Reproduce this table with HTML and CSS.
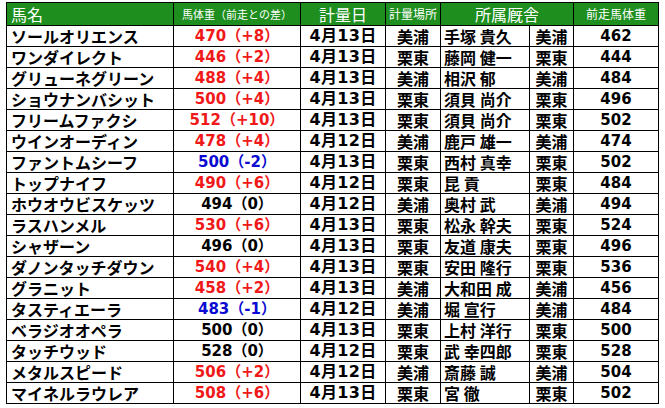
FILE: index.html
```html
<!DOCTYPE html>
<html lang="ja">
<head>
<meta charset="utf-8">
<link rel="stylesheet" href="styles.css">
</head>
<body>
<table class="tbl">
  <colgroup>
    <col class="c-name"><col class="c-wt"><col class="c-date"><col class="c-place"><col class="c-trainer"><col class="c-area"><col class="c-prev">
  </colgroup>
  <thead>
    <tr class="head">
      <th class="h-left h-big">馬名</th>
      <th class="h-xs">馬体重（前走との差）</th>
      <th class="h-big">計量日</th>
      <th class="h-sm">計量場所</th>
      <th class="h-big" colspan="2">所属厩舎</th>
      <th class="h-sm">前走馬体重</th>
    </tr>
  </thead>
  <tbody>
    <tr><td class="name">ソールオリエンス</td><td class="wt up">470（+8）</td><td class="date">4月13日</td><td class="ctr">美浦</td><td class="trainer">手塚 貴久</td><td class="ctr">美浦</td><td class="num">462</td></tr>
    <tr><td class="name">ワンダイレクト</td><td class="wt up">446（+2）</td><td class="date">4月13日</td><td class="ctr">栗東</td><td class="trainer">藤岡 健一</td><td class="ctr">栗東</td><td class="num">444</td></tr>
    <tr><td class="name">グリューネグリーン</td><td class="wt up">488（+4）</td><td class="date">4月13日</td><td class="ctr">美浦</td><td class="trainer">相沢 郁</td><td class="ctr">美浦</td><td class="num">484</td></tr>
    <tr><td class="name">ショウナンバシット</td><td class="wt up">500（+4）</td><td class="date">4月13日</td><td class="ctr">栗東</td><td class="trainer">須貝 尚介</td><td class="ctr">栗東</td><td class="num">496</td></tr>
    <tr><td class="name">フリームファクシ</td><td class="wt up">512（+10）</td><td class="date">4月13日</td><td class="ctr">栗東</td><td class="trainer">須貝 尚介</td><td class="ctr">栗東</td><td class="num">502</td></tr>
    <tr><td class="name">ウインオーディン</td><td class="wt up">478（+4）</td><td class="date">4月12日</td><td class="ctr">美浦</td><td class="trainer">鹿戸 雄一</td><td class="ctr">美浦</td><td class="num">474</td></tr>
    <tr><td class="name">ファントムシーフ</td><td class="wt down">500（-2）</td><td class="date">4月13日</td><td class="ctr">栗東</td><td class="trainer">西村 真幸</td><td class="ctr">栗東</td><td class="num">502</td></tr>
    <tr><td class="name">トップナイフ</td><td class="wt up">490（+6）</td><td class="date">4月12日</td><td class="ctr">栗東</td><td class="trainer">昆 貢</td><td class="ctr">栗東</td><td class="num">484</td></tr>
    <tr><td class="name">ホウオウビスケッツ</td><td class="wt">494（0）</td><td class="date">4月12日</td><td class="ctr">美浦</td><td class="trainer">奥村 武</td><td class="ctr">美浦</td><td class="num">494</td></tr>
    <tr><td class="name">ラスハンメル</td><td class="wt up">530（+6）</td><td class="date">4月13日</td><td class="ctr">栗東</td><td class="trainer">松永 幹夫</td><td class="ctr">栗東</td><td class="num">524</td></tr>
    <tr><td class="name">シャザーン</td><td class="wt">496（0）</td><td class="date">4月13日</td><td class="ctr">栗東</td><td class="trainer">友道 康夫</td><td class="ctr">栗東</td><td class="num">496</td></tr>
    <tr><td class="name">ダノンタッチダウン</td><td class="wt up">540（+4）</td><td class="date">4月13日</td><td class="ctr">栗東</td><td class="trainer">安田 隆行</td><td class="ctr">栗東</td><td class="num">536</td></tr>
    <tr><td class="name">グラニット</td><td class="wt up">458（+2）</td><td class="date">4月13日</td><td class="ctr">美浦</td><td class="trainer">大和田 成</td><td class="ctr">美浦</td><td class="num">456</td></tr>
    <tr><td class="name">タスティエーラ</td><td class="wt down">483（-1）</td><td class="date">4月12日</td><td class="ctr">美浦</td><td class="trainer">堀 宣行</td><td class="ctr">美浦</td><td class="num">484</td></tr>
    <tr><td class="name">ベラジオオペラ</td><td class="wt">500（0）</td><td class="date">4月13日</td><td class="ctr">栗東</td><td class="trainer">上村 洋行</td><td class="ctr">栗東</td><td class="num">500</td></tr>
    <tr><td class="name">タッチウッド</td><td class="wt">528（0）</td><td class="date">4月12日</td><td class="ctr">栗東</td><td class="trainer">武 幸四郎</td><td class="ctr">栗東</td><td class="num">528</td></tr>
    <tr><td class="name">メタルスピード</td><td class="wt up">506（+2）</td><td class="date">4月12日</td><td class="ctr">美浦</td><td class="trainer">斎藤 誠</td><td class="ctr">美浦</td><td class="num">504</td></tr>
    <tr><td class="name">マイネルラウレア</td><td class="wt up">508（+6）</td><td class="date">4月13日</td><td class="ctr">栗東</td><td class="trainer">宮 徹</td><td class="ctr">栗東</td><td class="num">502</td></tr>
  </tbody>
</table>
</body>
</html>
```

FILE: styles.css
```css
html, body {
  margin: 0;
  padding: 0;
  background: #ffffff;
}

body {
  padding: 2px 0 0 6px;
  font-family: "DejaVu Sans", "Noto Sans CJK JP", sans-serif;
  color: #000000;
}

.tbl {
  border-collapse: collapse;
  table-layout: fixed;
  width: 652px;
}

.c-name { width: 167px; }
.c-wt { width: 127px; }
.c-date { width: 85px; }
.c-place { width: 55px; }
.c-trainer { width: 89px; }
.c-area { width: 44px; }
.c-prev { width: 85px; }

.tbl th,
.tbl td {
  border: 1px solid #000000;
  padding: 0;
  white-space: nowrap;
  overflow: hidden;
}

.head th {
  background: #1e8f1e;
  color: #ffffff;
  font-family: "Noto Sans CJK JP", sans-serif;
  font-weight: 400;
  height: 22px;
  text-align: center;
  line-height: 20px;
}

.head .h-left {
  text-align: left;
  padding-left: 4px;
}

.h-big { font-size: 16px; }
.h-sm { font-size: 12px; }
.h-xs { font-size: 11px; }

.tbl td {
  height: 20px;
  font-size: 15px;
  font-weight: 700;
  line-height: 18px;
  text-align: center;
}

.tbl td.date {
  font-size: 16px;
  letter-spacing: 0.3px;
}

.tbl td.name {
  text-align: left;
  padding-left: 4px;
  font-family: "Noto Sans CJK JP", sans-serif;
  font-size: 16px;
}

.tbl td.trainer {
  text-align: left;
  padding-left: 3px;
  font-family: "Noto Sans CJK JP", sans-serif;
  font-size: 16px;
}

.tbl td.ctr {
  font-family: "Noto Sans CJK JP", sans-serif;
  font-size: 16px;
}

.wt.up { color: #f01818; }
.wt.down { color: #0a0ad2; }
```
